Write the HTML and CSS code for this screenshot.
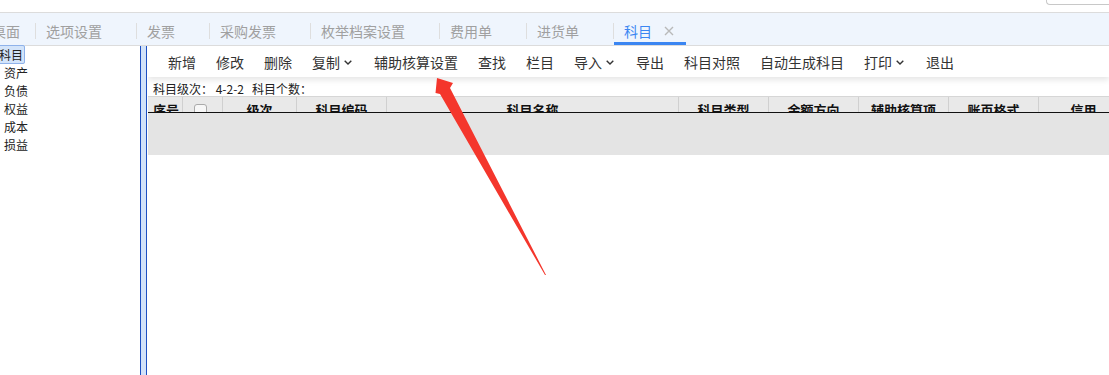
FILE: index.html
```
<!DOCTYPE html>
<html lang="zh-CN">
<head>
    <meta charset="UTF-8">
    <meta name="viewport" content="width=device-width, initial-scale=1.0">
    <title>科目</title>
    <link rel="stylesheet" href="styles.css">
</head>
<body>
    <div class="topbar">
        <div class="search"></div>
    </div>

    <div class="tabs">
        <div class="tab first">桌面</div>
        <span class="sep"></span>
        <div class="tab">选项设置</div>
        <span class="sep"></span>
        <div class="tab">发票</div>
        <span class="sep"></span>
        <div class="tab">采购发票</div>
        <span class="sep"></span>
        <div class="tab">枚举档案设置</div>
        <span class="sep"></span>
        <div class="tab">费用单</div>
        <span class="sep"></span>
        <div class="tab">进货单</div>
        <span class="sep"></span>
        <div class="tab active">科目
            <svg class="close" width="10" height="10" viewBox="0 0 10 10">
                <path d="M1 1 L9 9 M9 1 L1 9" stroke="#b9b9b9" stroke-width="1.4" fill="none"/>
            </svg>
        </div>
    </div>

    <div class="main">
        <div class="tree">
            <div class="node root"><span class="selected">科目</span></div>
            <div class="node">资产</div>
            <div class="node">负债</div>
            <div class="node">权益</div>
            <div class="node">成本</div>
            <div class="node">损益</div>
        </div>

        <div class="splitter"></div>

        <div class="content">
            <div class="toolbar">
                <span class="btn">新增</span>
                <span class="btn">修改</span>
                <span class="btn">删除</span>
                <span class="btn">复制<svg class="caret" width="8" height="5" viewBox="0 0 8 5"><path d="M0.7 0.7 L4 4 L7.3 0.7" stroke="#333" stroke-width="1.4" fill="none"/></svg></span>
                <span class="btn">辅助核算设置</span>
                <span class="btn">查找</span>
                <span class="btn">栏目</span>
                <span class="btn">导入<svg class="caret" width="8" height="5" viewBox="0 0 8 5"><path d="M0.7 0.7 L4 4 L7.3 0.7" stroke="#333" stroke-width="1.4" fill="none"/></svg></span>
                <span class="btn">导出</span>
                <span class="btn">科目对照</span>
                <span class="btn">自动生成科目</span>
                <span class="btn">打印<svg class="caret" width="8" height="5" viewBox="0 0 8 5"><path d="M0.7 0.7 L4 4 L7.3 0.7" stroke="#333" stroke-width="1.4" fill="none"/></svg></span>
                <span class="btn">退出</span>
            </div>

            <div class="info">科目级次： 4-2-2&nbsp;&nbsp; 科目个数：</div>

            <div class="grid-head">
                <div class="col c-no left">序号</div>
                <div class="col c-chk"><span class="checkbox"></span></div>
                <div class="col c-level">级次</div>
                <div class="col c-std">科目编码</div>
                <div class="col c-name">科目名称</div>
                <div class="col c-std">科目类型</div>
                <div class="col c-std">余额方向</div>
                <div class="col c-std">辅助核算项</div>
                <div class="col c-std">账页格式</div>
                <div class="col c-std">信用</div>
            </div>
            <div class="grid-body"></div>
        </div>
    </div>

    <!-- annotation arrow drawn over the screenshot -->
    <svg class="arrow" width="1109" height="375" viewBox="0 0 1109 375">
        <polygon points="437,78 453,83 450,88 546,275 545,275 440,94 435.5,93" fill="#f4362c"/>
    </svg>
</body>
</html>
```

FILE: styles.css
```
html, body {
    margin: 0;
    height: 100%;
    overflow: hidden;
}

body {
    font-family: "Noto Sans CJK SC", "Liberation Sans", sans-serif;
    color: #333;
    background: #fff;
    position: relative;
}

.topbar {
    height: 12px;
    display: flex;
    justify-content: flex-end;
}

.search {
    width: 62px;
    height: 4px;
    border: 1px solid #c8c8c8;
    border-top: none;
    border-right: none;
    border-radius: 0 0 0 4px;
}

.tabs {
    height: 32px;
    padding-top: 10px;
    box-sizing: border-box;
    height: 34px;
    background: #eff5fd;
    border-top: 1px solid #dcdcdc;
    border-bottom: 1px solid #dcdcdc;
    display: flex;
    align-items: flex-start;
    white-space: nowrap;
}

.tab {
    font-size: 14px;
    line-height: 16px;
    color: #a0a0a0;
    padding: 0 34px 3px 10px;
    border-bottom: 3px solid transparent;
    display: flex;
    align-items: center;
}

.tab.first {
    margin-left: -18px;
    padding-right: 15px;
}

.tab.active {
    color: #3b86f2;
    border-bottom-color: #3b86f2;
    padding-right: 12px;
}

.close {
    margin-left: 12px;
}

.sep {
    width: 1px;
    height: 16px;
    background: #dedede;
    flex: none;
}

.main {
    display: flex;
    height: 329px;
}

.tree {
    width: 140px;
    flex: none;
    font-size: 12px;
    line-height: 18px;
    color: #222;
}

.node {
    padding-left: 4px;
}

.node.root {
    padding-left: 0;
}

.selected {
    margin-left: -3px;
    padding: 0 1px;
    background: #d3e4fa;
    border: 1px solid #8fb2ea;
    border-radius: 2px;
}

.splitter {
    width: 5px;
    flex: none;
    background: #d2e2f8;
    border-left: 1px solid #1d4fc2;
    border-right: 1px solid #1d4fc2;
}

.content {
    flex: 1;
    margin-left: 1px;
    min-width: 0;
    overflow: hidden;
}

.toolbar {
    height: 31px;
    padding: 1px 0 0 20px;
    box-sizing: border-box;
    display: flex;
    align-items: center;
    gap: 20px;
    font-size: 14px;
    color: #333;
    white-space: nowrap;
    box-shadow: 0 3px 6px rgba(0, 0, 0, 0.1);
    position: relative;
}

.btn {
    display: flex;
    align-items: center;
}

.caret {
    margin: 0 2px 0 4px;
}

.info {
    font-size: 12px;
    line-height: 14px;
    padding: 5px 0 0 5px;
    height: 14px;
    color: #222;
}

.grid-head {
    display: flex;
    height: 15px;
    background: #e9e9e9;
    border-top: 1px solid #d6d6d6;
    border-bottom: 1px solid #111;
    overflow: hidden;
    white-space: nowrap;
}

.col {
    flex: none;
    box-sizing: border-box;
    border-right: 1px solid #d0d0d0;
    font-size: 13px;
    font-weight: bold;
    line-height: 13px;
    padding-top: 6px;
    color: #111;
    text-align: center;
    overflow: hidden;
}

.col.left {
    text-align: left;
    padding-left: 5px;
}

.c-no { width: 35px; }
.c-chk { width: 40px; }
.c-level { width: 74px; }
.c-std { width: 90px; }
.c-name { width: 292px; }

.checkbox {
    display: inline-block;
    width: 11px;
    height: 11px;
    margin-left: -4px;
    margin-top: 1px;
    border: 1px solid #aaa;
    border-radius: 3px;
    background: #f7f7f7;
    vertical-align: top;
}

.grid-body {
    height: 42px;
    background: #e4e4e4;
}

.arrow {
    position: absolute;
    top: 0;
    left: 0;
    pointer-events: none;
}
```
